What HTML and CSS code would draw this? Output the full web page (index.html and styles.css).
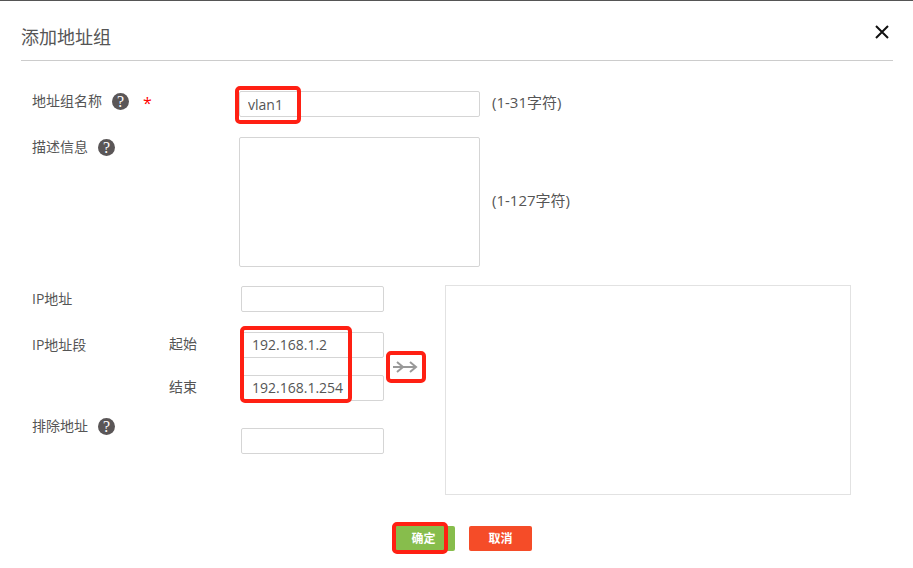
FILE: index.html
```html
<!DOCTYPE html>
<html lang="zh-CN">
  <head>
    <meta charset="utf-8">
    <title>添加地址组</title>
    <link rel="stylesheet" href="styles.css">
  </head>
  <body>
    <form class="dialog">
      <div class="header">
        <h1>添加地址组</h1>
        <button type="button" class="close" aria-label="关闭">
          <svg width="16" height="16" viewBox="0 0 16 16"><path d="M2 2L14 14M14 2L2 14"/></svg>
        </button>
      </div>

      <div class="content">
        <!-- name and description -->
        <div class="row">
          <div class="label"><label for="groupName">地址组名称</label><span class="help">?</span><span class="required">*</span></div>
          <div class="marked">
            <input type="text" id="groupName" class="wide" value="vlan1">
            <span class="mark mark-name"></span>
          </div>
          <span class="hint">(1-31字符)</span>
        </div>
        <div class="row">
          <div class="label"><label for="description">描述信息</label><span class="help">?</span></div>
          <textarea id="description" class="wide"></textarea>
          <span class="hint">(1-127字符)</span>
        </div>

        <!-- addresses on the left, list of added ones on the right -->
        <div class="addresses">
          <div class="fields">
            <div class="field">
              <label for="ip">IP地址</label>
              <input type="text" id="ip">
            </div>
            <div class="field">
              <span>IP地址段</span>
              <div class="range marked">
                <div class="line">
                  <label for="start">起始</label>
                  <input type="text" id="start" value="192.168.1.2">
                </div>
                <div class="line">
                  <label for="end">结束</label>
                  <input type="text" id="end" value="192.168.1.254">
                </div>
                <span class="mark mark-range"></span>
              </div>
              <button type="button" class="add marked" aria-label="添加">
                <svg width="26" height="14" viewBox="0 0 26 14"><path d="M1 7H24M5 2L11 7L5 12M18 2L24 7L18 12"/></svg>
                <span class="mark mark-add"></span>
              </button>
            </div>
            <div class="field exclude">
              <div class="label"><label for="exclude">排除地址</label><span class="help">?</span></div>
              <input type="text" id="exclude">
            </div>
          </div>
          <div class="list"></div>
        </div>
      </div>

      <div class="footer">
        <button type="button" class="btn ok marked">确定<span class="mark mark-ok"></span></button>
        <button type="button" class="btn cancel">取消</button>
      </div>
    </form>
  </body>
</html>
```

FILE: styles.css
```css
* {
  box-sizing: border-box;
}

body {
  margin: 0;
  background: #fff;
  color: #555;
  font-family: "Open Sans", "Noto Sans CJK SC", sans-serif;
  font-size: 14px;
  line-height: 20px;
}

.dialog {
  border-top: 1px solid #555;
  padding: 0 20px 0 21px;
}

.header {
  display: flex;
  justify-content: space-between;
  align-items: flex-start;
  height: 60px;
  padding-top: 23px;
  border-bottom: 1px solid #ccc;
}

.header h1 {
  margin: 0;
  font-size: 18px;
  font-weight: normal;
  line-height: 26px;
}

.close {
  display: flex;
  padding: 0;
  margin-right: 3px;
  border: 0;
  background: none;
  cursor: pointer;
}

.close path {
  fill: none;
  stroke: #111;
  stroke-width: 2;
}

.content {
  padding: 30px 42px 0 11px;
}

.row {
  display: flex;
  align-items: flex-start;
  margin-bottom: 20px;
}

.row .label {
  width: 207px;
}

.label {
  display: flex;
  align-items: center;
}

.help {
  width: 17px;
  height: 17px;
  margin-left: 10px;
  border-radius: 50%;
  background: #5a5657;
  color: #fff;
  font: 16px/17px "Liberation Serif", serif;
  text-align: center;
}

.required {
  margin-left: 14px;
  padding-top: 5px;
  color: #f00;
  font-size: 16px;
  line-height: 15px;
}

input,
textarea {
  display: block;
  margin: 0;
  padding: 0 10px;
  border: 1px solid #d5d5d5;
  border-radius: 2px;
  background: #fff;
  color: #555;
  font: inherit;
}

input {
  width: 143px;
  height: 26px;
}

.wide {
  width: 241px;
  padding: 0 8px;
}

textarea {
  height: 130px;
  resize: none;
}

.hint {
  align-self: center;
  margin-left: 12px;
  padding-bottom: 4px;
  font-size: 15px;
}

.addresses {
  display: flex;
  margin-top: -2px;
}

.fields {
  width: 413px;
  padding-top: 1px;
}

.field {
  display: flex;
  align-items: flex-start;
  line-height: 26px;
  margin-bottom: 20px;
}

.field > :first-child {
  width: 209px;
}

.field > span:first-child {
  width: 137px;
}

.range {
  display: grid;
  gap: 17px;
}

.line {
  display: flex;
}

.line label {
  width: 72px;
  line-height: 24px;
}

.add {
  display: flex;
  align-self: center;
  justify-content: center;
  align-items: center;
  width: 36px;
  height: 26px;
  margin-left: 3px;
  padding: 0;
  border: 0;
  background: none;
  cursor: pointer;
}

.add path {
  fill: none;
  stroke: #999;
  stroke-width: 2;
}

.exclude {
  margin: -5px 0 0;
  line-height: 20px;
}

.exclude input {
  margin-top: 12px;
}

.list {
  flex: 1;
  min-height: 210px;
  border: 1px solid #e2e2e2;
}

.footer {
  display: flex;
  justify-content: center;
  gap: 14px;
  padding: 31px 0 17px 10px;
}

.btn {
  width: 63px;
  height: 25px;
  padding: 0;
  border: 0;
  border-radius: 2px;
  color: #fff;
  font: bold 12px/25px "Open Sans", "Noto Sans CJK SC", sans-serif;
  cursor: pointer;
}

.ok {
  background: #87bd4c;
}

.cancel {
  background: #f54c28;
}

/* red highlight boxes drawn over the controls */
.marked {
  position: relative;
}

.mark {
  position: absolute;
  border: 4px solid #ff2013;
  border-radius: 5px;
  pointer-events: none;
}

.mark-name {
  top: -5px;
  left: -4px;
  width: 66px;
  height: 38px;
}

.mark-range {
  top: -6px;
  left: 71px;
  width: 112px;
  height: 77px;
}

.mark-add {
  top: -3px;
  left: -1px;
  width: 40px;
  height: 32px;
}

.mark-ok {
  top: -4px;
  left: 0;
  width: 56px;
  height: 32px;
}
```
